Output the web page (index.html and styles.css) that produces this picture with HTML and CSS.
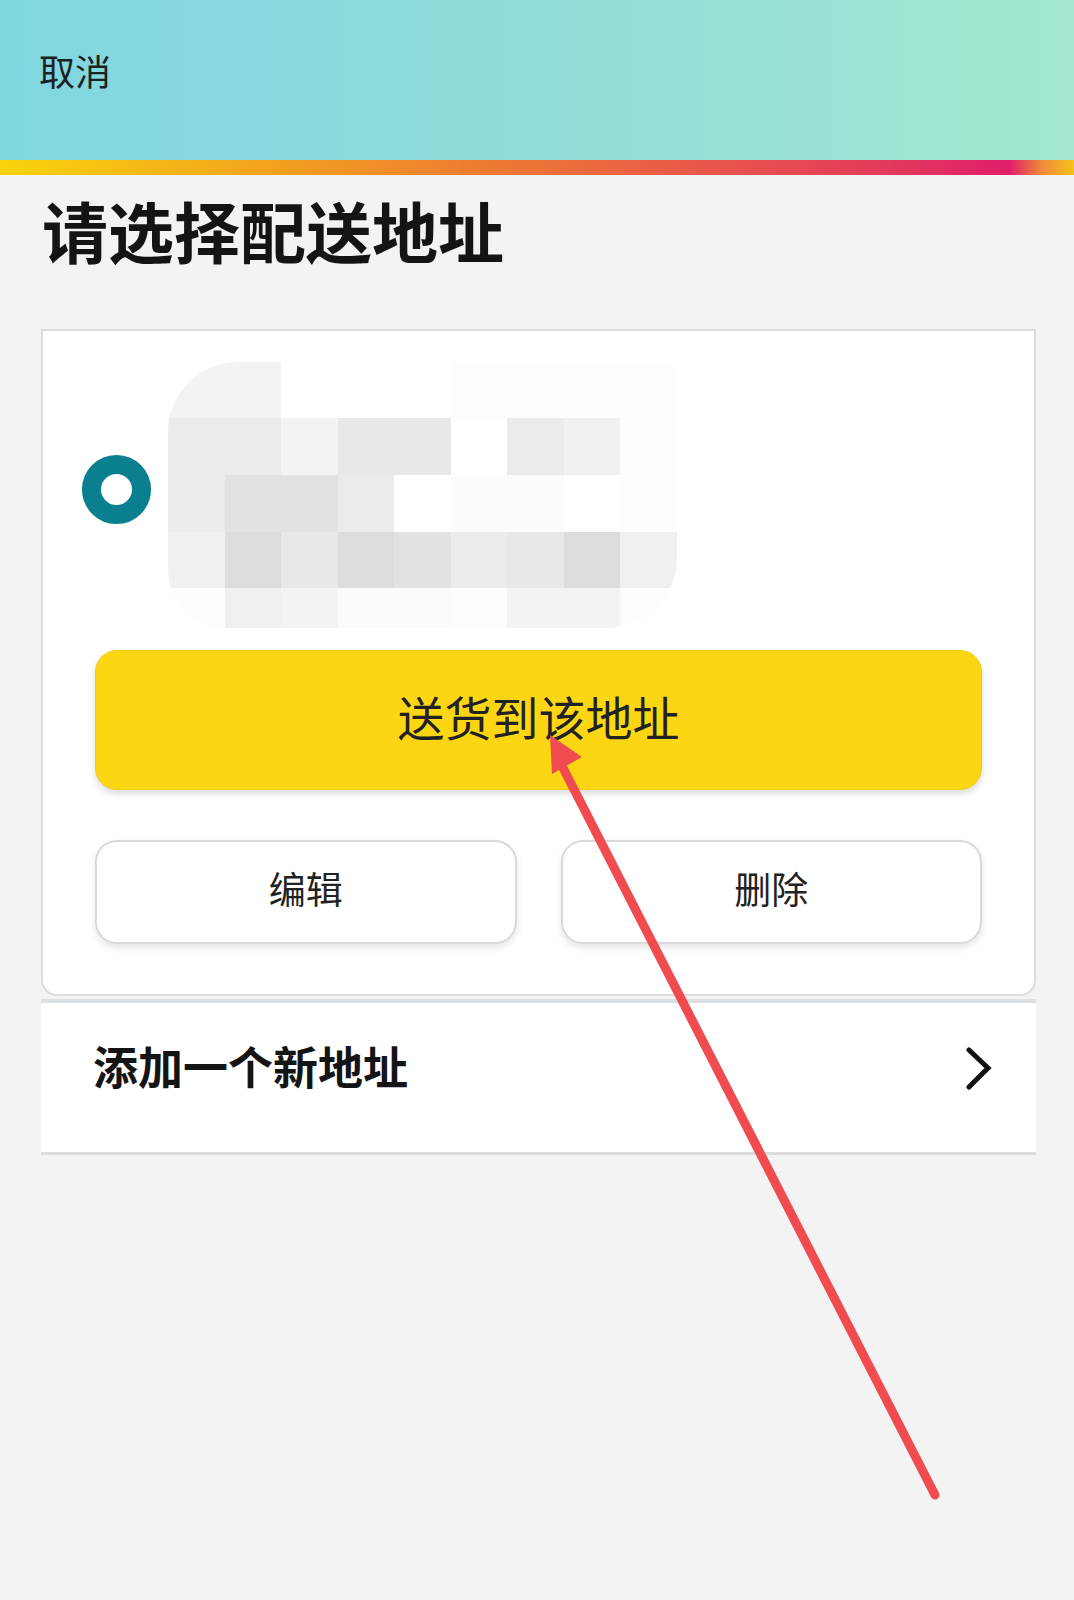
FILE: index.html
```html
<!DOCTYPE html>
<html lang="zh-CN">
<head>
<meta charset="utf-8">
<title>请选择配送地址</title>
<link rel="stylesheet" href="styles.css">
</head>
<body>
<div class="page">
  <header class="topbar">
    <span class="cancel">取消</span>
  </header>
  <div class="stripe"></div>
  <h1 class="title">请选择配送地址</h1>

  <section class="card">
    <div class="addr-row">
      <span class="radio"></span>
      <div class="mosaic">
        <i class="m1"></i><i class="m1"></i><i class="m9"></i><i class="m9"></i><i class="m9"></i><i class="m0"></i><i class="m0"></i><i class="m0"></i><i class="m0"></i>
        <i class="m3"></i><i class="m3"></i><i class="m1"></i><i class="m4"></i><i class="m4"></i><i class="m9"></i><i class="m3"></i><i class="m2"></i><i class="m0"></i>
        <i class="m3"></i><i class="m5"></i><i class="m5"></i><i class="m3"></i><i class="m9"></i><i class="m8"></i><i class="m8"></i><i class="m9"></i><i class="m0"></i>
        <i class="m2"></i><i class="m6"></i><i class="m4"></i><i class="m6"></i><i class="m5"></i><i class="m3"></i><i class="m4"></i><i class="m6"></i><i class="m2"></i>
        <i class="m0"></i><i class="m2"></i><i class="m1"></i><i class="m8"></i><i class="m8"></i><i class="m0"></i><i class="m1"></i><i class="m1"></i><i class="m0"></i>
      </div>
    </div>
    <button class="btn-primary">送货到该地址</button>
    <div class="btn-row">
      <button class="btn-secondary">编辑</button>
      <button class="btn-secondary">删除</button>
    </div>
  </section>

  <a class="add-row">
    <span class="add-text">添加一个新地址</span>
    <svg class="chev" width="30" height="44" viewBox="0 0 30 44"><path d="M5 3 L24 21 L5 40" fill="none" stroke="#111" stroke-width="5" stroke-linecap="round" stroke-linejoin="miter"/></svg>
  </a>

  <svg class="annot" width="1074" height="1600" viewBox="0 0 1074 1600">
    <line x1="560" y1="762" x2="935" y2="1495" stroke="#f04b4f" stroke-width="9" stroke-linecap="round"/>
    <polygon points="550,735 552,774 582,757" fill="#f04b4f"/>
  </svg>
</div>
</body>
</html>
```
FILE: styles.css
```css
* { box-sizing: border-box; }
html, body { margin: 0; padding: 0; }
body {
  background: #f3f3f3;
  font-family: "Noto Sans CJK SC", "Noto Sans", sans-serif;
  color: #1a1a1a;
}
.page {
  position: relative;
  width: 1074px;
  min-height: 1600px;
}
.topbar {
  height: 160px;
  background: linear-gradient(90deg, #80d6e0 0%, #8fdcdb 45%, #a3e7d0 100%);
  padding: 50px 0 0 39px;
}
.cancel {
  font-size: 36px;
  line-height: 40px;
  color: #1c2222;
}
.stripe {
  height: 15px;
  background: linear-gradient(90deg, #fad40a 0%, #f3a81c 22%, #ee7b31 45%, #e8584a 65%, #e33b5b 82%, #e01e6a 94%, #f08a3a 97%, #f6c21a 100%);
}
.title {
  margin: 14px 0 0 42px;
  font-size: 66px;
  line-height: 80px;
  font-weight: 700;
  color: #141414;
}
.card {
  margin: 60px 38px 0 41px;
  background: #fff;
  border: 2px solid #dcdcdc;
  border-radius: 0 0 16px 16px;
  padding: 0 52px 50px 52px;
}
.addr-row {
  display: flex;
  align-items: flex-start;
  height: 319px;
  margin-left: -13px;
}
.radio {
  flex: none;
  width: 69px;
  height: 69px;
  margin-top: 124px;
  border-radius: 50%;
  border: 19px solid #0a7f8f;
  background: #fff;
}
.mosaic {
  margin: 31px 0 0 17px;
  display: grid;
  grid-template-columns: repeat(9, 56.5px);
  grid-template-rows: 56px 57px 57px 56px 40px;
  border-radius: 70px 20px 70px 60px;
  overflow: hidden;
}
.mosaic i { display: block; }
.m0 { background: #fdfdfd; }
.m1 { background: #f3f3f3; }
.m2 { background: #f0f0f0; }
.m3 { background: #ebebeb; }
.m4 { background: #e8e8e8; }
.m5 { background: #e2e2e2; }
.m6 { background: #dcdcdc; }
.m8 { background: #fbfbfb; }
.m9 { background: #ffffff; }
.btn-primary {
  display: block;
  width: 100%;
  height: 140px;
  padding: 0 0 10px;
  border: 1px solid #f3cd10;
  border-radius: 22px;
  background: #fdd613;
  font-family: inherit;
  font-size: 47px;
  color: #222;
  box-shadow: 0 4px 7px rgba(0, 0, 0, 0.14);
}
.btn-row {
  display: grid;
  grid-template-columns: 1fr 1fr;
  gap: 44px;
  margin-top: 50px;
}
.btn-secondary {
  height: 104px;
  padding: 0 0 9px;
  border: 2px solid #d9d9d9;
  border-radius: 22px;
  background: #fff;
  font-family: inherit;
  font-size: 37px;
  color: #222;
  box-shadow: 0 4px 7px rgba(0, 0, 0, 0.1);
}
.add-row {
  display: flex;
  align-items: center;
  justify-content: space-between;
  margin: 3px 38px 0 41px;
  height: 156px;
  background: #fff;
  border-top: 4px solid #dcdfe1;
  border-bottom: 3px solid #dcdcdc;
  padding: 0 42px 24px 52px;
}
.add-text {
  font-size: 45px;
  font-weight: 700;
  color: #141414;
}
.chev { display: block; margin-top: 6px; }
.annot {
  position: absolute;
  left: 0;
  top: 0;
  pointer-events: none;
}
```
